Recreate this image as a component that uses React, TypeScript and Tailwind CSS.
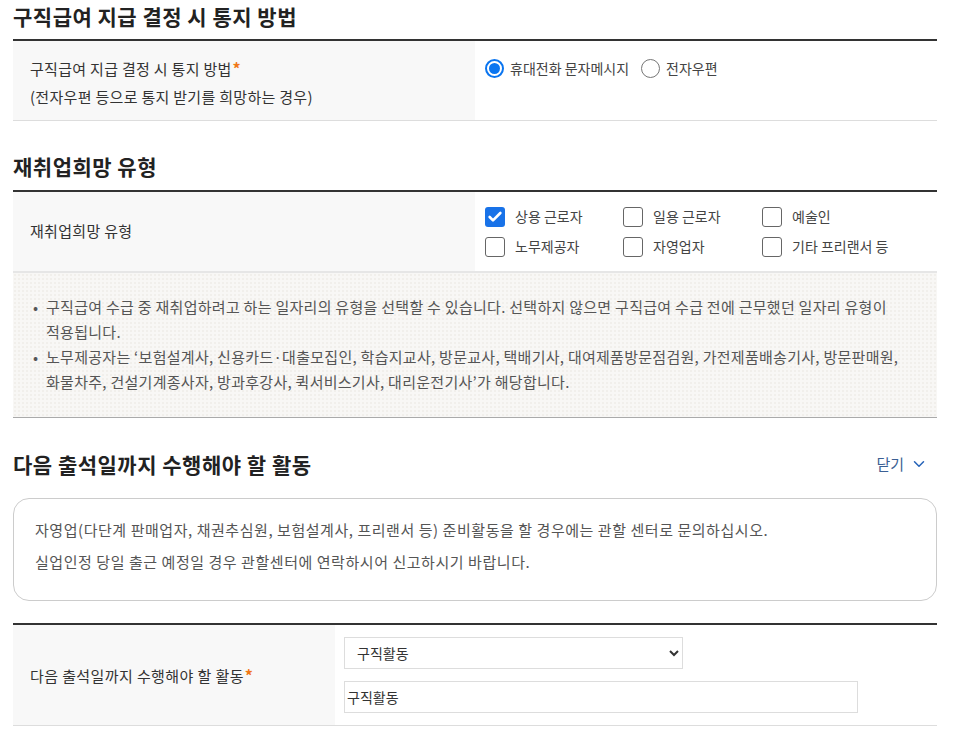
import { ChevronDown, Check } from 'lucide-react'

const font = 'font-["Noto_Sans_CJK_KR","Noto_Sans",sans-serif]'
const heading = 'text-[21px] font-bold leading-[32px] tracking-[0.5px] text-[#222]'

const Star = () => <span className="ml-px text-[16px] font-bold text-[#f07818]">*</span>

const Radio = ({ checked, label }: { checked?: boolean; label: string }) => (
  <label className="flex items-center gap-[6px]">
    {checked ? (
      <span className="flex h-[19px] w-[19px] items-center justify-center rounded-full border-2 border-[#0a75f0]">
        <span className="h-[11px] w-[11px] rounded-full bg-[#0a75f0]" />
      </span>
    ) : (
      <span className="h-[19px] w-[19px] rounded-full border border-[#767676]" />
    )}
    <span>{label}</span>
  </label>
)

const Box = ({ checked, label }: { checked?: boolean; label: string }) => (
  <label className="flex items-center gap-[10px]">
    {checked ? (
      <span className="flex h-5 w-5 items-center justify-center rounded-[3px] bg-[#1872e8]">
        <Check className="h-4 w-4 text-white" strokeWidth={4} />
      </span>
    ) : (
      <span className="h-5 w-5 rounded-[3px] border border-[#666]" />
    )}
    <span>{label}</span>
  </label>
)

export default function App() {
  return (
    <div className={`${font} ml-[13px] w-[924px] bg-white pb-10 text-[14px] text-[#333]`}>
      <h2 className={`mb-[7px] ${heading}`}>구직급여 지급 결정 시 통지 방법</h2>
      <div className="flex h-[82px] border-t-2 border-b border-t-[#333] border-b-[#ddd]">
        <div className="w-[462px] bg-[#f8f8f8] pl-[17px] pt-[13px] text-[15px] leading-[28px] tracking-[0.3px]">
          <p>구직급여 지급 결정 시 통지 방법<Star /></p>
          <p>(전자우편 등으로 통지 받기를 희망하는 경우)</p>
        </div>
        <div className="flex flex-1 items-start gap-3 pl-[10px] pt-[13px] leading-[28px] text-[#444]">
          <Radio checked label="휴대전화 문자메시지" />
          <Radio label="전자우편" />
        </div>
      </div>

      <h2 className={`mb-2 mt-[29px] ${heading}`}>재취업희망 유형</h2>
      <div className="flex h-[81px] border-t-2 border-t-[#333]">
        <div className="flex w-[462px] items-center bg-[#f8f8f8] pl-[17px] text-[15px] tracking-[0.3px]">재취업희망 유형</div>
        <div className="grid flex-1 grid-cols-[138px_139px_140px] content-center gap-y-[9px] pl-[10px] text-[#444]">
          <Box checked label="상용 근로자" />
          <Box label="일용 근로자" />
          <Box label="예술인" />
          <Box label="노무제공자" />
          <Box label="자영업자" />
          <Box label="기타 프리랜서 등" />
        </div>
      </div>
      <div className="break-keep border-t-2 border-b border-t-[#e6e6e6] border-b-[#aaa] bg-[#f8f7f5] bg-[radial-gradient(#f1efeb_1px,transparent_1px)] bg-[length:4px_4px] pb-[23px] pl-[20px] pr-4 pt-[21px] text-[15px] leading-[25px] tracking-[0.28px] text-[#555]">
        <ul>
          <li className="flex">
            <span className="w-[13px] shrink-0">•</span>
            <span>구직급여 수급 중 재취업하려고 하는 일자리의 유형을 선택할 수 있습니다. 선택하지 않으면 구직급여 수급 전에 근무했던 일자리 유형이 적용됩니다.</span>
          </li>
          <li className="flex">
            <span className="w-[13px] shrink-0">•</span>
            <span>노무제공자는 ‘보험설계사, 신용카드·대출모집인, 학습지교사, 방문교사, 택배기사, 대여제품방문점검원, 가전제품배송기사, 방문판매원, 화물차주, 건설기계종사자, 방과후강사, 퀵서비스기사, 대리운전기사’가 해당합니다.</span>
          </li>
        </ul>
      </div>

      <div className="mb-[18px] mt-[30px] flex items-center justify-between">
        <h2 className={heading}>다음 출석일까지 수행해야 할 활동</h2>
        <button className="mr-[9px] flex items-center gap-[6px] text-[15px] text-[#3b5f94]">
          닫기 <ChevronDown className="h-[18px] w-[18px] text-[#2563b8]" strokeWidth={2} />
        </button>
      </div>
      <div className="rounded-2xl border border-[#ccc] px-[21px] pb-[26px] pt-[19px] text-[15px] leading-[24px] tracking-[0.55px] text-[#555]">
        <p>자영업(다단계 판매업자, 채권추심원, 보험설계사, 프리랜서 등) 준비활동을 할 경우에는 관할 센터로 문의하십시오.</p>
        <p className="mt-[8px]">실업인정 당일 출근 예정일 경우 관할센터에 연락하시어 신고하시기 바랍니다.</p>
      </div>

      <div className="mt-[22px] flex border-t-2 border-b border-t-[#333] border-b-[#ddd]">
        <div className="flex w-[322px] items-center bg-[#f8f8f8] pl-[17px] text-[15px] tracking-[0.4px]">
          <span>다음 출석일까지 수행해야 할 활동<Star /></span>
        </div>
        <div className="flex flex-1 flex-col gap-3 py-3 pl-[9px]">
          <select className="h-8 w-[339px] border border-[#ddd] bg-white pl-2 text-[#333]">
            <option>구직활동</option>
          </select>
          <input className="h-8 w-[514px] border border-[#ddd] px-0.5 text-[#333]" defaultValue="구직활동" />
        </div>
      </div>
    </div>
  )
}
